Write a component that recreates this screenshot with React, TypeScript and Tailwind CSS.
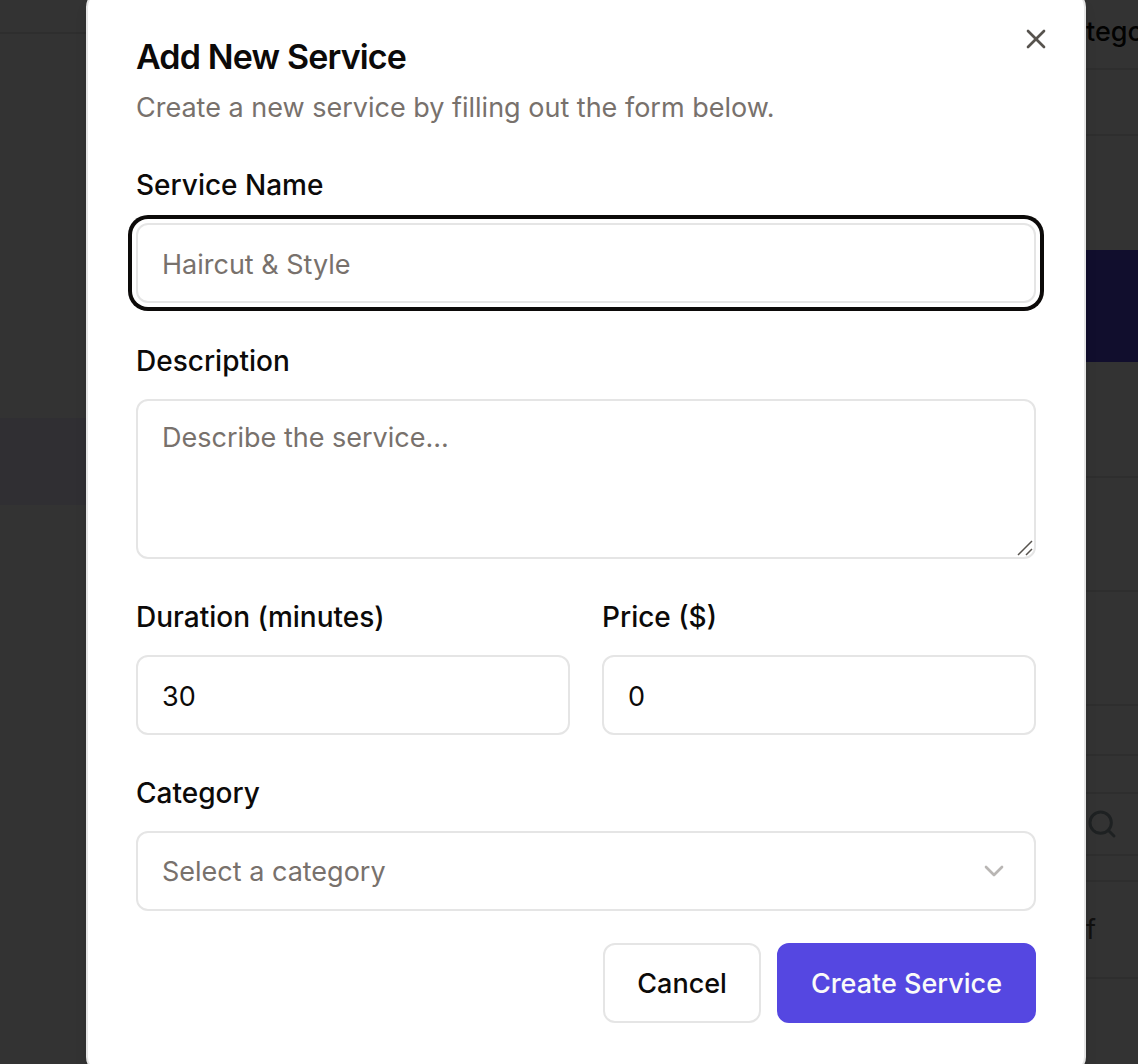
import type { ReactNode } from "react";
import { ChevronDown, Search, X } from "lucide-react";

const control =
  "block w-full rounded-xl border-2 border-[#e5e5e5] bg-white px-6 text-[27px] leading-10 text-[#0c0a09] outline-none placeholder:text-[#78716c] placeholder:opacity-100";

function Field({ id, label, children }: { id: string; label: string; children: ReactNode }) {
  return (
    <div className="flex min-w-0 flex-1 flex-col gap-[15px]">
      <label htmlFor={id} className="text-[28px] font-medium leading-[46px]">
        {label}
      </label>
      {children}
    </div>
  );
}

function Backdrop() {
  return (
    <div aria-hidden="true" className="absolute inset-0 flex justify-between overflow-hidden bg-white">
      <div className="w-24 shrink-0">
        <div className="h-[34px] border-b-2 border-[#e5e5e5]" />
        <div className="h-96" />
        <div className="h-[87px] bg-[#eeecff]" />
      </div>
      <div className="flex w-[52px] shrink-0 flex-col text-[27px] leading-10">
        <div className="h-[70px] border-b-2 border-[#e5e5e5] pt-3 font-medium">tego</div>
        <div className="h-[66px] border-b-2 border-[#e5e5e5]" />
        <div className="h-[114px]" />
        <div className="h-28 bg-[#5547e1]" />
        <div className="h-[116px] border-b-2 border-[#e5e5e5]" />
        <div className="h-[114px] border-b-2 border-[#e5e5e5]" />
        <div className="h-[114px] border-b-2 border-[#e5e5e5]" />
        <div className="h-[50px] border-b-2 border-[#e5e5e5]" />
        <div className="h-[38px] border-b-2 border-[#e5e5e5]" />
        <div className="flex h-[62px] items-center border-b-2 border-[#e5e5e5]">
          <Search className="size-8 shrink-0 text-[#94a3a8]" strokeWidth={2.25} />
        </div>
        <div className="h-[26px] border-b-2 border-[#e5e5e5]" />
        <div className="flex h-[97px] items-center border-b-2 border-[#e5e5e5] text-[#57534e]">f</div>
      </div>
    </div>
  );
}

export default function App() {
  return (
    <div className="fixed inset-0 font-['Inter',sans-serif] text-[#0c0a09] antialiased">
      <Backdrop />
      <div className="absolute inset-0 flex items-center overflow-hidden bg-black/80 pl-[86px] pr-[52px]">
        <div
          role="dialog"
          aria-labelledby="dialog-title"
          aria-describedby="dialog-description"
          className="relative w-full rounded-2xl border-2 border-[#e5e5e5] bg-white p-12 shadow-lg"
        >
          <h2 id="dialog-title" className="text-[34px] font-semibold leading-8 tracking-tight">
            Add New Service
          </h2>
          <p id="dialog-description" className="mt-3.5 text-[27px] leading-[42px] text-[#78716c]">
            Create a new service by filling out the form below.
          </p>

          <form className="mt-[33px] flex flex-col" onSubmit={(e) => e.preventDefault()}>
            <div className="flex flex-col gap-[35px]">
              <Field id="name" label="Service Name">
                <input
                  id="name"
                  type="text"
                  placeholder="Haircut & Style"
                  className={`${control} h-20 pt-0.5 ring-4 ring-[#0c0a09] ring-offset-4 ring-offset-white`}
                />
              </Field>
              <Field id="description" label="Description">
                <div className="relative">
                  <textarea
                    id="description"
                    placeholder="Describe the service..."
                    className={`${control} h-40 resize-none py-[17px]`}
                  />
                  <svg
                    viewBox="0 0 16 16"
                    className="pointer-events-none absolute bottom-[3px] right-[3px] size-4 stroke-[#57534e]"
                    strokeWidth="1.5"
                    aria-hidden="true"
                  >
                    <path d="M1 15 15 1M9 15l6-6" />
                  </svg>
                </div>
              </Field>
              <div className="flex gap-8">
                <Field id="duration" label="Duration (minutes)">
                  <input id="duration" type="number" defaultValue={30} className={`${control} h-20 pt-0.5`} />
                </Field>
                <Field id="price" label="Price ($)">
                  <input id="price" type="number" defaultValue={0} className={`${control} h-20 pt-0.5`} />
                </Field>
              </div>
              <Field id="category" label="Category">
                <div className="relative">
                  <select id="category" className={`${control} h-20 appearance-none pt-0.5 text-[#78716c]`}>
                    <option>Select a category</option>
                  </select>
                  <ChevronDown
                    className="pointer-events-none absolute right-[26px] top-6 size-8 text-[#b9b6b4]"
                    aria-hidden="true"
                  />
                </div>
              </Field>
            </div>
            <div className="mt-8 flex justify-end gap-4">
              <button
                type="button"
                className="h-20 rounded-xl border-2 border-[#e5e5e5] bg-white px-8 pt-0.5 text-[27px] font-medium"
              >
                Cancel
              </button>
              <button
                type="submit"
                className="h-20 rounded-xl border-2 border-[#5547e1] bg-[#5547e1] px-8 pt-0.5 text-[27px] font-medium text-[#fafaf9]"
              >
                Create Service
              </button>
            </div>
          </form>

          <button type="button" aria-label="Close" className="absolute right-8 top-[30px] text-[#57534e]">
            <X className="size-8" />
          </button>
        </div>
      </div>
    </div>
  );
}
